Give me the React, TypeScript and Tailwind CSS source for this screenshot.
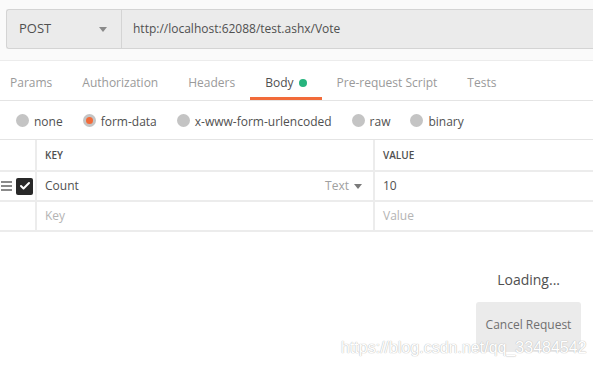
import { Check } from "lucide-react";

const TABS = ["Params", "Authorization", "Headers", "Body", "Pre-request Script", "Tests"];

const MODES = [
  { label: "none", active: false },
  { label: "form-data", active: true },
  { label: "x-www-form-urlencoded", active: false },
  { label: "raw", active: false },
  { label: "binary", active: false },
];

function Radio({ active }: { active: boolean }) {
  return (
    <span className="flex size-[13px] items-center justify-center rounded-full bg-[#c4c4c4]">
      {active && <span className="size-[7px] rounded-full bg-[#f26b3a]" />}
    </span>
  );
}

export default function App() {
  return (
    <div
      className="relative h-[365px] w-[593px] overflow-hidden bg-white text-[12px] text-[#505050]"
      style={{ fontFamily: '"Open Sans", "Noto Sans", sans-serif' }}
    >
      {/* Request bar */}
      <div className="h-[61px] border-b border-[#ececec] bg-[#fafafa] pl-[6px] pt-[9px]">
        <div className="flex h-[40px] rounded-l-[3px] border border-r-0 border-[#d4d4d4] bg-[#ebebeb]">
          <div className="flex w-[115px] items-center justify-between border-r border-[#d4d4d4] pl-[12px] pr-[14px]">
            <span className="text-[13px]">POST</span>
            <span className="mt-[1px] border-x-[4px] border-t-[5px] border-x-transparent border-t-[#8a8a8a]" />
          </div>
          <div className="flex items-center pl-[11px]">http://localhost:62088/test.ashx/Vote</div>
        </div>
      </div>

      {/* Tabs */}
      <div className="flex h-[40px] border-b border-[#e4e4e4] pl-[10px] pt-[4px]">
        {TABS.map((t) => (
          <div
            key={t}
            className={`relative mr-[30px] flex items-center ${
              t === "Body" ? "text-[#505050]" : "text-[#9a9a9a]"
            }`}
          >
            {t}
            {t === "Body" && (
              <>
                <span className="ml-[5px] size-[8px] rounded-full bg-[#27b47e]" />
                <span className="absolute bottom-0 left-[-15px] right-[-15px] h-[3px] bg-[#f26b3a]" />
              </>
            )}
          </div>
        ))}
      </div>

      {/* Body modes */}
      <div className="flex h-[39px] items-center gap-[20px] border-b border-[#e4e4e4] pl-[16px] pt-[1px]">
        {MODES.map((m) => (
          <div key={m.label} className="flex items-center gap-[5px]">
            <Radio active={m.active} />
            <span className="mt-[3px]">{m.label}</span>
          </div>
        ))}
      </div>

      {/* Params table */}
      <div className="grid grid-cols-[37px_338px_1fr] text-[#505050]">
        <div className="h-[32px] border-b-2 border-r-2 border-[#ececec]" />
        <div className="flex h-[32px] items-center border-b-2 border-r-2 border-[#ececec] pl-[8px] text-[10px] font-semibold">
          KEY
        </div>
        <div className="flex h-[32px] items-center border-b-2 border-[#ececec] pl-[8px] text-[10px] font-semibold">
          VALUE
        </div>

        <div className="flex h-[30px] items-center justify-end gap-[4px] border-b-2 border-r-2 border-[#ececec] pr-[2px]">
          <span className="flex flex-col gap-[2px]">
            <span className="h-[2px] w-[11px] bg-[#8a8a8a]" />
            <span className="h-[2px] w-[11px] bg-[#8a8a8a]" />
            <span className="h-[2px] w-[11px] bg-[#8a8a8a]" />
          </span>
          <span className="flex size-[17px] items-center justify-center rounded-[2px] bg-[#282828]">
            <Check className="size-[12px] text-white" strokeWidth={4} />
          </span>
        </div>
        <div className="flex h-[30px] items-center justify-between border-b-2 border-r-2 border-[#ececec] pl-[8px] pr-[11px]">
          <span>Count</span>
          <span className="flex items-center gap-[5px] text-[#a0a0a0]">
            Text
            <span className="border-x-[4px] border-t-[5px] border-x-transparent border-t-[#7a7a7a]" />
          </span>
        </div>
        <div className="flex h-[30px] items-center border-b-2 border-[#ececec] pl-[8px]">10</div>

        <div className="h-[30px] border-b-2 border-r-2 border-[#ececec]" />
        <div className="flex h-[30px] items-center border-b-2 border-r-2 border-[#ececec] pl-[8px] text-[#b4b4b4]">
          Key
        </div>
        <div className="flex h-[30px] items-center border-b-2 border-[#ececec] pl-[8px] text-[#b4b4b4]">
          Value
        </div>
      </div>

      {/* Loading */}
      <div className="flex flex-col items-end pr-[12px] pt-[37px]">
        <div className="mr-[21px] text-[14px] text-[#505050]">Loading...</div>
        <div className="mt-[12px] flex h-[50px] w-[105px] items-start justify-center rounded-[3px] bg-[#ebebeb] pt-[14px] text-[#707070]">
          Cancel Request
        </div>
      </div>

      {/* Watermark */}
      <div
        className="absolute left-[341px] top-[336px] text-[16px] text-white"
        style={{
          fontFamily: '"Liberation Sans", Arial, sans-serif',
          textShadow: "0 0 1px #bbb, 0 0 1px #bbb",
        }}
      >
        https://blog.csdn.net/qq_33484542
      </div>
    </div>
  );
}
